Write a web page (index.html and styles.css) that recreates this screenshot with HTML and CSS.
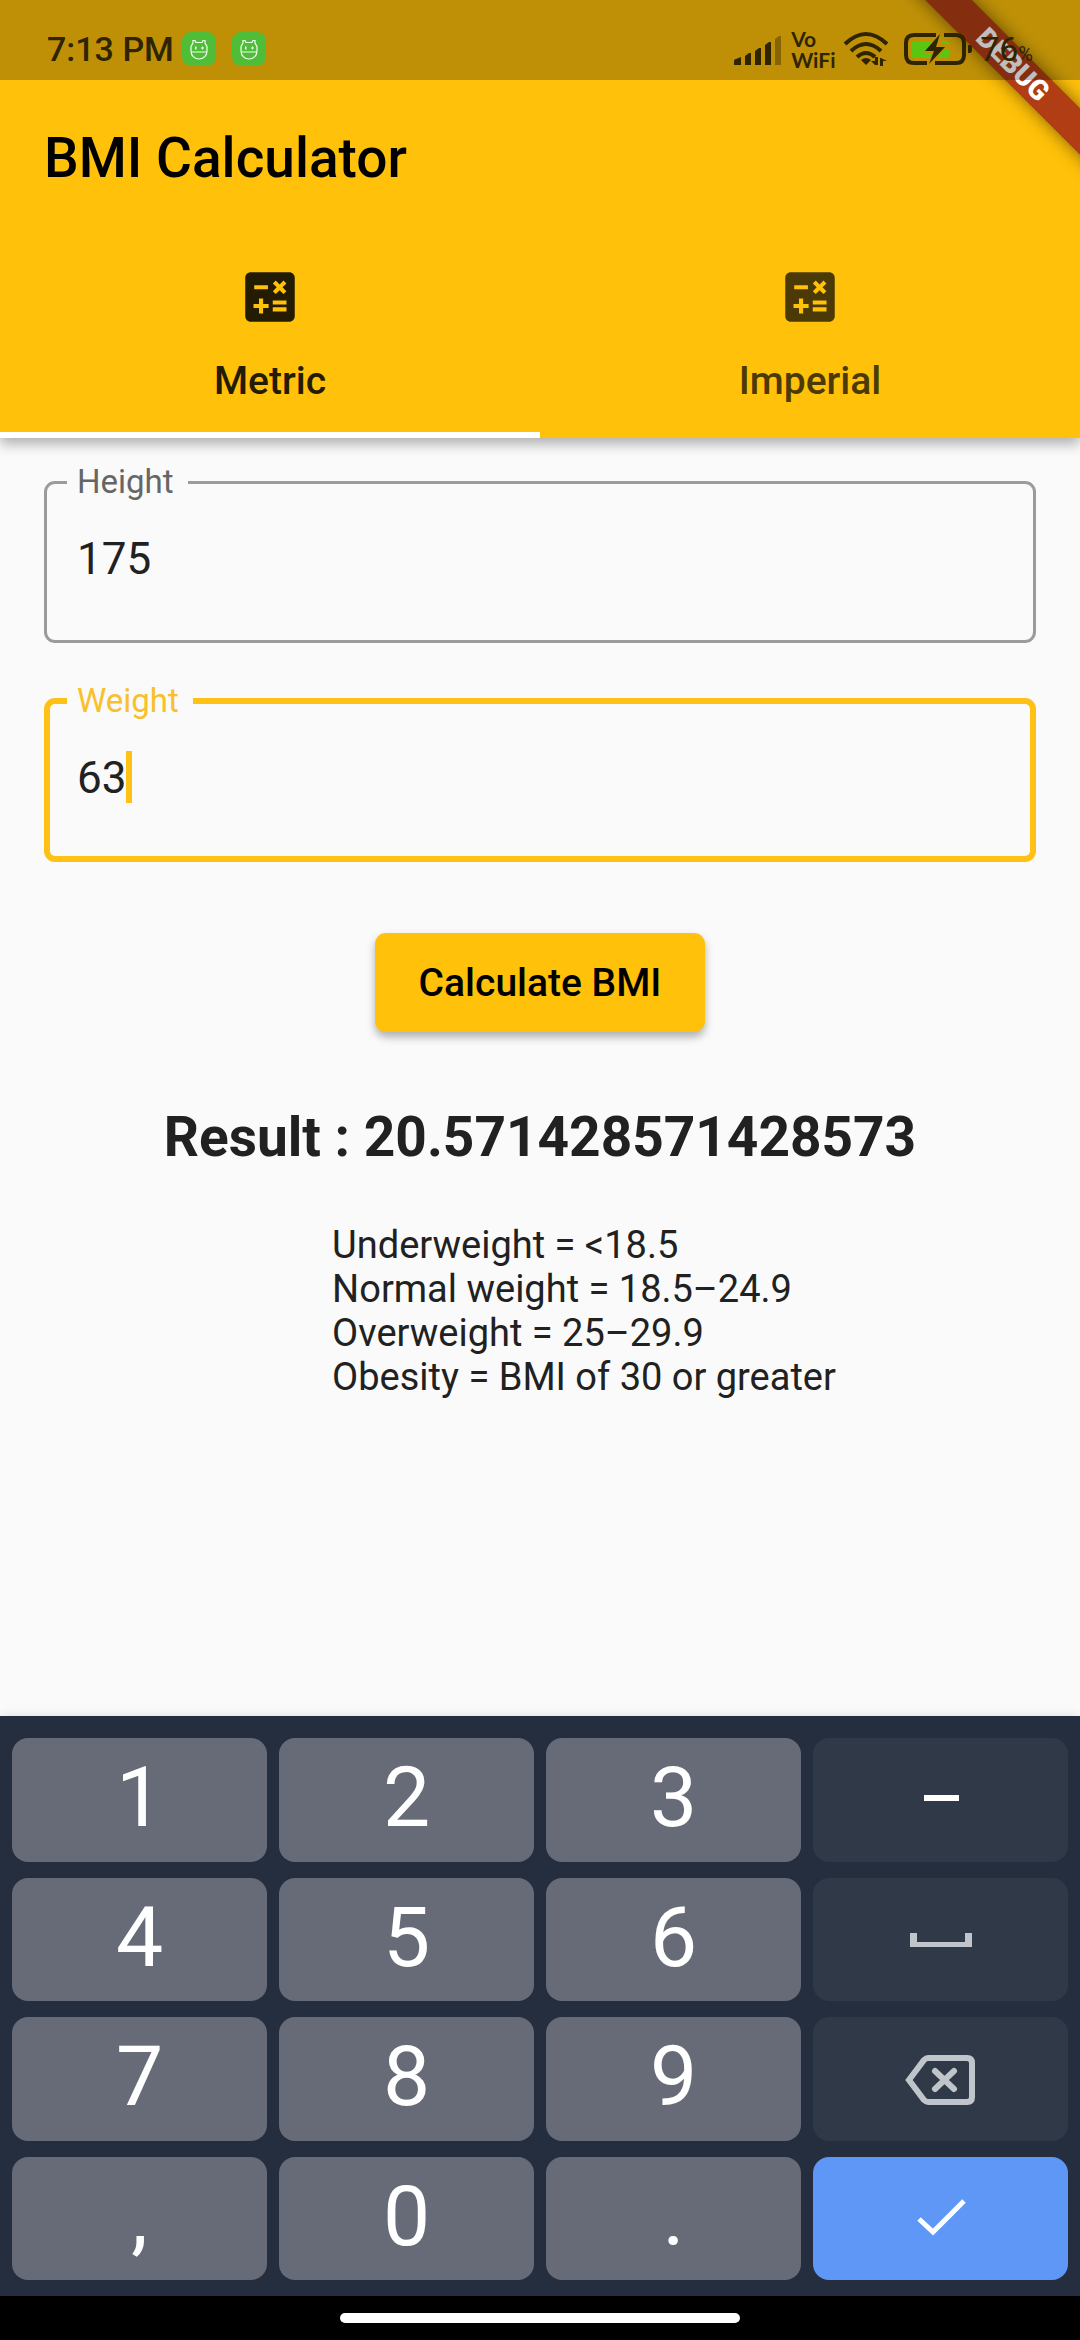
FILE: index.html
```html
<!DOCTYPE html>
<html lang="en">
<head>
<meta charset="utf-8">
<meta name="viewport" content="width=device-width, initial-scale=1">
<title>BMI Calculator</title>
<link rel="stylesheet" href="styles.css">
</head>
<body>
<svg class="defs" aria-hidden="true">
  <symbol id="calc" viewBox="0 0 24 24"><path d="M19 3H5c-1.100 0-2 .9-2 2v14c0 1.100.9 2 2 2h14c1.100 0 2-.9 2-2V5c0-1.100-.9-2-2-2zM13.030 7.060L14.090 6l1.410 1.410L16.910 6l1.060 1.060-1.410 1.410 1.410 1.410-1.060 1.060-1.410-1.400-1.410 1.410-1.060-1.060 1.410-1.410zM6.250 7.720h5v1.500h-5zM11.500 16h-2v2H8v-2H6v-1.500h2v-2h1.500v2h2zm6.500 1.250h-5v-1.500h5zm0-2.500h-5v-1.500h5z"/></symbol>
  <symbol id="bot" viewBox="0 0 34 34">
    <rect width="34" height="34" rx="9" fill="#4fbd38"/>
    <path d="M9 19v-4c0-2 2-3 2-4V8.500h2l1 2h6l1-2h2V11c0 1 2 2 2 4v4c0 5-4 8-8 8s-8-3-8-8zM9 20h16" fill="none" stroke="#f2fff0" stroke-width="1.200"/>
    <path d="M13 14.500h1.500v3H13zM19 15.500h3v1h-3zM20 14.500h1v3h-1z" fill="#f2fff0"/>
  </symbol>
</svg>

<header class="app-bar">
  <div class="status-bar">
    <div class="status-left">
      <span class="clock">7:13 PM</span>
      <svg class="bot"><use href="#bot"/></svg>
      <svg class="bot"><use href="#bot"/></svg>
    </div>
    <div class="status-right">
      <svg class="signal" viewBox="0 0 48 32"><path d="M0 32v-4q0-2 2-2l5-2v8zM11 32v-9l4-3h2v12zM21 32V18l4-3h2v17zM31 32V12l4-3h2v23z"/><path d="M41 32V6l4-3h2v29z" opacity=".4"/></svg>
      <span class="vowifi"><span>Vo</span><span>WiFi</span></span>
      <svg class="wifi" viewBox="0 0 46 36">
        <g fill="none" stroke="#2f2400" stroke-width="4"><path d="M2 13Q23-7 44 13"/><path d="M8 20Q23 6 38 20"/><path d="M14 26Q23 18 32 26"/></g>
        <path d="M18 29q5-4 10 0l-5 5zM32 34l-4-4h4v-4h3v8zm5 1v-8h1l6 3h-4v5z"/>
      </svg>
      <svg class="battery" viewBox="0 0 68 32">
        <path d="M32 2H10q-8 0-8 8v12q0 8 8 8h13M31 30h21q8 0 8-8V10q0-8-8-8H40" fill="none" stroke="#2f2400" stroke-width="4"/>
        <path d="M10 8h19L20 20h8l-2 5H10q-3 0-3-3V11q0-3 3-3zM38 8h4q3 0 3 3h-8zM36 21l5-5h4v6q0 3-3 3h-9z" fill="#5ac611"/>
        <path d="M36 1L21 18h9l-5 13 16-17h-9zM64 12h2q2 0 2 3v2q0 3-2 3h-2z"/>
      </svg>
      <span class="charge">76<small>%</small></span>
    </div>
  </div>
  <h1 class="title">BMI Calculator</h1>
  <nav class="tabs">
    <a class="tab active" href="#metric"><svg class="tab-icon"><use href="#calc"/></svg>Metric</a>
    <a class="tab" href="#imperial"><svg class="tab-icon"><use href="#calc"/></svg>Imperial</a>
  </nav>
  <div class="ribbon-corner"><div class="ribbon">DEBUG</div></div>
</header>

<main class="content">
  <fieldset class="field">
    <legend><label for="height">Height</label></legend>
    <input id="height" type="text" inputmode="numeric" value="175">
  </fieldset>
  <fieldset class="field focused">
    <legend><label for="weight">Weight</label></legend>
    <input id="weight" type="text" inputmode="numeric" value="63">
    <span class="cursor"></span>
  </fieldset>
  <button class="calculate" type="button">Calculate BMI</button>
  <h2 class="result">Result : 20.571428571428573</h2>
  <ul class="ranges">
    <li>Underweight = &lt;18.5</li>
    <li>Normal weight = 18.5–24.9</li>
    <li>Overweight = 25–29.9</li>
    <li>Obesity = BMI of 30 or greater</li>
  </ul>
</main>

<section class="keyboard" aria-label="Numeric keyboard">
  <button class="key">1</button><button class="key">2</button><button class="key">3</button>
  <button class="key side" aria-label="Minus"><svg class="key-icon" viewBox="0 0 72 72"><path d="M19 31h35v6H19z" fill="#fff"/></svg></button>
  <button class="key">4</button><button class="key">5</button><button class="key">6</button>
  <button class="key side" aria-label="Space"><svg class="key-icon" viewBox="0 0 72 72"><path d="M5 30h7v9h48v-9h7v14H5z" fill="#c0c4cb"/></svg></button>
  <button class="key">7</button><button class="key">8</button><button class="key">9</button>
  <button class="key side" aria-label="Backspace"><svg class="key-icon" viewBox="0 0 72 72"><g fill="none" stroke="#c0c4cb" stroke-width="6"><path d="M23 15h39q5 0 5 5v34q0 5-5 5H23q-2 0-4-2L4 37l15-20q2-2 4-2z"/><path d="M30 28l19 18M49 28L30 46" stroke-linecap="round"/></g></svg></button>
  <button class="key">,</button><button class="key">0</button><button class="key">.</button>
  <button class="key done" aria-label="Done"><svg class="key-icon" viewBox="0 0 72 72"><path d="M14 37l14 13 31-31" fill="none" stroke="#fff" stroke-width="5"/></svg></button>
</section>
<footer class="nav-bar"><span class="home"></span></footer>
</body>
</html>
```
FILE: styles.css
```css
* { box-sizing: border-box; }

body {
  margin: 0;
  min-height: 100vh;
  display: flex;
  flex-direction: column;
  background: #fafafa;
  color: #212121;
  font-family: Roboto, sans-serif;
}

.defs { position: absolute; width: 0; height: 0; }

button { border: 0; font-family: inherit; }

/* App bar */
.app-bar {
  position: relative;
  background: #ffc109;
  box-shadow: 0 6px 12px rgba(0, 0, 0, .3);
}

/* Translucent scrim that also dims the ribbon beneath it */
.status-bar {
  position: relative;
  z-index: 2;
  height: 80px;
  padding: 18px 47px 0;
  display: flex;
  justify-content: space-between;
  background: rgba(0, 0, 0, .25);
  color: #2f2400;
  fill: #2f2400;
}

.status-left, .status-right { display: flex; align-items: center; }
.status-left { gap: 16px; }
.clock { font-size: 34px; font-weight: 500; margin-right: -8px; }
.bot { width: 34px; height: 34px; }
.signal { width: 48px; height: 32px; margin-right: 9px; }
.vowifi {
  display: flex;
  flex-direction: column;
  width: 43px;
  margin-right: 9px;
  font: 700 21px/21px Lato, sans-serif;
}
.wifi { width: 46px; height: 36px; margin-right: 15px; }
.battery { width: 68px; height: 32px; margin-right: 8px; }
.charge { font-size: 34px; }
.charge small { font-size: 20px; }

.title {
  margin: 0;
  padding: 0 44px;
  font-size: 55px;
  font-weight: 500;
  line-height: 156px;
  color: #000;
}

.tabs { display: grid; grid-template-columns: 1fr 1fr; }

.tab {
  display: flex;
  flex-direction: column;
  align-items: center;
  gap: 29px;
  height: 202px;
  padding-top: 28px;
  border-bottom: 6px solid transparent;
  color: #4b3a05;
  fill: currentColor;
  font-size: 39px;
  font-weight: 500;
  line-height: 44px;
  text-decoration: none;
}
.tab.active { color: #241c02; border-bottom-color: #fff; }
.tab-icon { width: 66px; height: 66px; }

.ribbon-corner {
  position: absolute;
  top: 0;
  right: 0;
  width: 240px;
  height: 240px;
  overflow: hidden;
}
.ribbon {
  position: absolute;
  top: 48px;
  right: -98px;
  width: 330px;
  height: 33px;
  transform: rotate(45deg);
  background: #b03d14;
  box-shadow: 0 0 17px rgba(0, 0, 0, .5);
  color: #fff;
  font-size: 28px;
  font-weight: 900;
  line-height: 33px;
  text-align: center;
}

/* Form */
.content {
  flex: 1;
  display: flex;
  flex-direction: column;
  align-items: center;
  padding: 24px 44px 0;
}

.field {
  position: relative;
  width: 100%;
  height: 181px;
  margin: 0 0 38px;
  padding: 0 30px;
  border: 3px solid #9b9b9b;
  border-radius: 11px;
}
.field legend {
  margin-left: -10px;
  padding: 0 14px 0 10px;
  color: #666;
  font-size: 33px;
  line-height: 40px;
}
.field input {
  width: 100%;
  height: 72px;
  margin-top: 21px;
  padding: 0;
  border: 0;
  outline: 0;
  background: none;
  color: #212121;
  font: 44px/52px Roboto, sans-serif;
}
.focused { border: 6px solid #ffc116; padding: 0 27px; }
.focused legend { color: #f8c02a; }
.cursor {
  position: absolute;
  left: 76px;
  top: 30px;
  width: 6px;
  height: 52px;
  background: #ffc116;
}

.calculate {
  height: 99px;
  margin-top: 33px;
  padding: 0 44px;
  border-radius: 11px;
  background: #ffc109;
  box-shadow: 0 5px 8px rgba(0, 0, 0, .3);
  color: #000;
  font-size: 39px;
  font-weight: 500;
}

.result {
  margin: 73px 0 0;
  font-size: 55px;
  font-weight: 700;
  line-height: 64px;
}

.ranges {
  margin: 54px 0 0;
  padding: 0 0 0 88px;
  list-style: none;
  font-size: 38px;
  line-height: 44px;
}

/* Keyboard */
.keyboard {
  display: grid;
  grid-template-columns: repeat(4, 1fr);
  grid-auto-rows: 1fr;
  gap: 16px 12px;
  height: 580px;
  padding: 22px 12px 16px;
  background: #252e3f;
  box-shadow: 0 0 10px rgba(0, 0, 0, .12);
}
.key {
  display: flex;
  align-items: center;
  justify-content: center;
  padding: 0 0 3px;
  border-radius: 16px;
  background: #666b77;
  color: #fff;
  font-size: 84px;
  line-height: 96px;
}
.side { background: #303947; padding: 0; }
.done { background: #5f97f6; padding: 0; }
.key-icon { width: 72px; height: 72px; }

.nav-bar {
  height: 44px;
  display: flex;
  align-items: center;
  justify-content: center;
  background: #000;
}
.home { width: 400px; height: 10px; border-radius: 5px; background: #fff; }
```
